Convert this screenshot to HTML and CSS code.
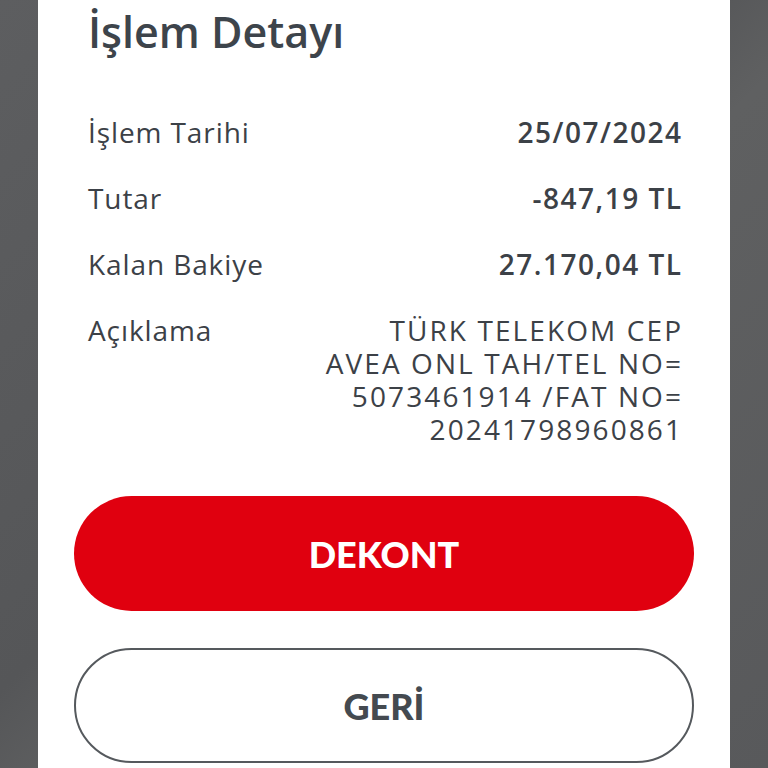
FILE: index.html
```html
<!DOCTYPE html>
<html lang="tr">
<head>
<meta charset="utf-8">
<link rel="stylesheet" href="styles.css">
</head>
<body>
<div class="screen">
  <div class="panel">
    <h1 class="title">İşlem Detayı</h1>
    <div class="rows">
      <div class="row"><span class="label">İşlem Tarihi</span><span class="value">25/07/2024</span></div>
      <div class="row"><span class="label">Tutar</span><span class="value">-847,19 TL</span></div>
      <div class="row"><span class="label">Kalan Bakiye</span><span class="value">27.170,04 TL</span></div>
      <div class="row"><span class="label">Açıklama</span><span class="desc">TÜRK TELEKOM CEP<br>AVEA ONL TAH/TEL NO=<br>5073461914 /FAT NO=<br>20241798960861</span></div>
    </div>
    <div class="actions">
      <button class="btn btn-primary">DEKONT</button>
      <button class="btn btn-secondary">GERİ</button>
    </div>
  </div>
</div>
</body>
</html>
```

FILE: styles.css
```css
html, body {
  margin: 0;
  padding: 0;
  height: 100%;
}
body {
  background: linear-gradient(135deg, #5d5e60 0%, #555658 45%, #5f6061 55%, #58595b 100%);
  font-family: "Open Sans", "Liberation Sans", sans-serif;
  color: #3b4046;
  overflow: hidden;
}
.screen {
  height: 768px;
  padding: 0 38px;
}
.panel {
  background: #ffffff;
  height: 100%;
  padding: 0 36px;
  box-sizing: border-box;
}
.title {
  margin: 0;
  padding: 3px 0 0 14px;
  font-size: 43px;
  line-height: 58px;
  font-weight: 600;
  color: #3d444b;
}
.rows {
  padding: 55px 13px 0 14px;
}
.row {
  display: flex;
  justify-content: space-between;
  align-items: flex-start;
  font-size: 28px;
  line-height: 33px;
  margin-bottom: 33px;
}
.label {
  color: #3c4147;
  font-weight: 400;
  letter-spacing: 0.9px;
}
.value {
  font-weight: 600;
  color: #3c4147;
  letter-spacing: 1.5px;
  margin-right: -1.5px;
}
.desc {
  text-align: right;
  color: #3c4147;
  font-weight: 400;
  letter-spacing: 2.1px;
  margin-right: -2.1px;
}
.actions {
  display: flex;
  flex-direction: column;
  gap: 37px;
  margin-top: 50px;
}
.btn {
  height: 115px;
  border-radius: 58px;
  font-family: "Lato", "Liberation Sans", sans-serif;
  font-size: 36px;
  font-weight: 900;
  cursor: pointer;
}
.btn-primary {
  background: #e0000f;
  color: #ffffff;
  border: none;
}
.btn-secondary {
  background: #ffffff;
  color: #444a50;
  border: 2px solid #55595d;
}
```
